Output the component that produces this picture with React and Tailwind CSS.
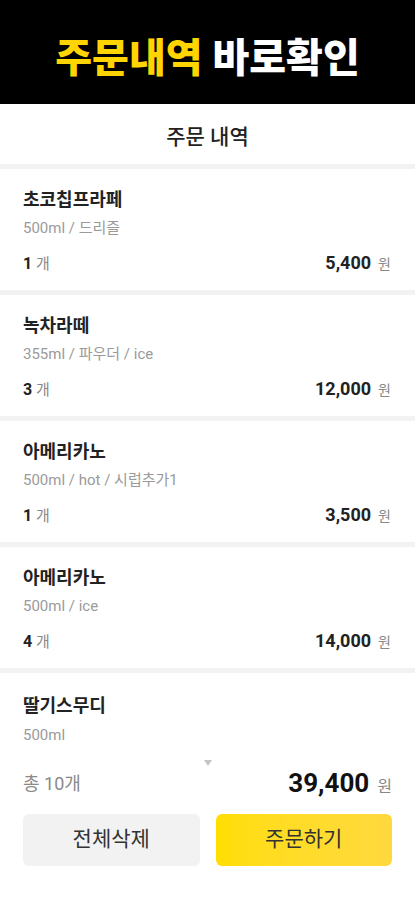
import React from "react";

const items = [
  { name: "초코칩프라페", opt: "500ml / 드리즐", qty: "1", price: "5,400" },
  { name: "녹차라떼", opt: "355ml / 파우더 / ice", qty: "3", price: "12,000" },
  { name: "아메리카노", opt: "500ml / hot / 시럽추가1", qty: "1", price: "3,500" },
  { name: "아메리카노", opt: "500ml / ice", qty: "4", price: "14,000" },
];

const font = { fontFamily: 'Roboto, "Noto Sans CJK KR", "Noto Sans", sans-serif' };

export default function App() {
  return (
    <div className="w-[415px] h-[900px] bg-white overflow-hidden" style={font}>
      <div className="h-[104px] bg-black flex items-center justify-center pt-[14px]">
        <div className="text-[40px] font-black tracking-[0px] leading-none">
          <span className="text-[#FFD400]">주문내역</span>
          <span className="text-white"> 바로확인</span>
        </div>
      </div>
      <div className="h-[60px] flex items-center justify-center pt-[7px]">
        <span className="text-[21px] font-medium text-[#222]">주문 내역</span>
      </div>
      {items.map((it, i) => (
        <div key={i}>
          <div className="h-[5px] bg-[#f2f2f2]" />
          <div className="h-[121px] px-[23px] pt-[20px]">
            <div className="text-[18px] font-bold leading-[22px] text-[#222]">{it.name}</div>
            <div className="mt-[7px] text-[15px] leading-[20px] text-[#9a9a9a]">{it.opt}</div>
            <div className="mt-[14px] flex items-center justify-between leading-[22px]">
              <div className="text-[16px] text-[#222]">
                <span className="font-bold">{it.qty}</span>
                <span className="text-[15px] text-[#888]"> 개</span>
              </div>
              <div className="flex items-baseline pr-[1px]">
                <span className="text-[18px] font-bold text-[#222]">{it.price}</span>
                <span className="ml-[7px] text-[14px] text-[#888]">원</span>
              </div>
            </div>
          </div>
        </div>
      ))}
      <div className="h-[5px] bg-[#f2f2f2]" />
      <div className="px-[23px] pt-[22px]">
        <div className="text-[18px] font-bold leading-[22px] text-[#222]">딸기스무디</div>
        <div className="mt-[8px] text-[15px] leading-[20px] text-[#9a9a9a]">500ml</div>
        <div className="flex justify-center mt-[15px] h-[6px]">
          <svg width="8" height="6" viewBox="0 0 8 6" className="ml-[1px]">
            <path d="M0 0 L8 0 L4 6 Z" fill="#c4c4c4" />
          </svg>
        </div>
        <div className="mt-[2px] flex items-center justify-between h-[30px]">
          <span className="text-[18px] text-[#8a8a8a]">총 10개</span>
          <div className="flex items-baseline">
            <span className="text-[26px] font-bold text-[#111]">39,400</span>
            <span className="ml-[8px] text-[16px] text-[#888]">원</span>
          </div>
        </div>
        <div className="mt-[16px] grid grid-cols-2 gap-[16px]">
          <button className="h-[52px] rounded-[6px] bg-[#f2f2f2] text-[21px] text-[#333]" style={font}>전체삭제</button>
          <button className="h-[52px] rounded-[6px] bg-gradient-to-r from-[#FFDE00] to-[#FFD93D] text-[21px] text-[#333]" style={font}>주문하기</button>
        </div>
      </div>
    </div>
  );
}
